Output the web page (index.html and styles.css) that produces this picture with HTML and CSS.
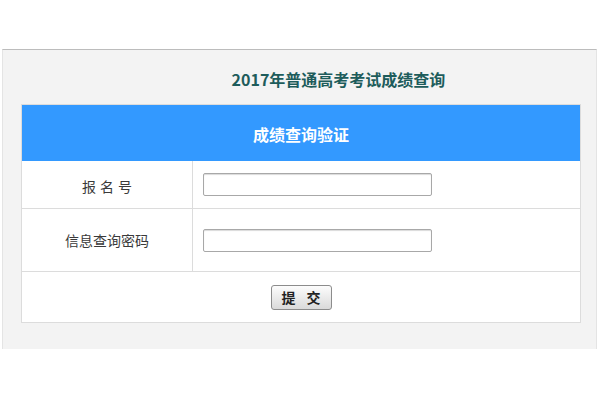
FILE: index.html
```html
<!DOCTYPE html>
<html lang="zh-CN">

<head>
    <meta charset="UTF-8">
    <title>2017年普通高考考试成绩查询</title>
    <link rel="stylesheet" href="styles.css">
</head>

<body>
    <div class="panel">
        <h1 class="title">2017年普通高考考试成绩查询</h1>

        <!-- Query Form -->
        <form class="query-form" action="#" method="POST">
            <div class="form-head">成绩查询验证</div>
            <div class="form-row">
                <label class="row-label spaced" for="exam-no">报名号</label>
                <div class="row-field">
                    <input type="text" id="exam-no" name="exam_no">
                </div>
            </div>
            <div class="form-row tall">
                <label class="row-label" for="query-pwd">信息查询密码</label>
                <div class="row-field">
                    <input type="password" id="query-pwd" name="query_pwd">
                </div>
            </div>
            <div class="form-foot">
                <button type="submit" class="submit-btn">提 交</button>
            </div>
        </form>
    </div>
</body>

</html>
```

FILE: styles.css
```css
body {
    margin: 0;
    padding: 0;
    background-color: #fff;
    font-family: "Noto Sans CJK SC", "Noto Sans", sans-serif;
}

/* Gray page panel */
.panel {
    margin: 49px 3px 0 2px;
    padding: 0 16px 26px 18px;
    background-color: #f3f3f3;
    border-top: 1px solid #bcbcbc;
    border-left: 1px solid #e4e4e4;
    border-right: 1px solid #e4e4e4;
}

.title {
    margin: 0;
    padding: 19px 0 15px 76px;
    font-size: 16px;
    line-height: 20px;
    font-weight: bold;
    color: #1d5c5b;
    text-align: center;
}

/* Form table */
.query-form {
    width: 560px;
    box-sizing: border-box;
    margin: 0;
    border: 1px solid #dcdcdc;
    background-color: #fff;
}

.form-head {
    height: 56px;
    padding-top: 2px;
    box-sizing: border-box;
    background-color: #3399ff;
    color: #fff;
    font-size: 16px;
    font-weight: bold;
    display: flex;
    align-items: center;
    justify-content: center;
}

.form-row {
    display: grid;
    grid-template-columns: 171px 1fr;
    height: 48px;
    box-sizing: border-box;
    border-bottom: 1px solid #dcdcdc;
}

.form-row.tall {
    height: 63px;
}

.row-label {
    border-right: 1px solid #dcdcdc;
    display: flex;
    align-items: center;
    justify-content: center;
    font-size: 14px;
    color: #3a3a3a;
}

.row-label.spaced {
    letter-spacing: 4px;
    padding-left: 4px;
    padding-top: 3px;
}

.row-field {
    display: flex;
    align-items: center;
    padding-left: 10px;
}

.row-field input {
    width: 229px;
    height: 23px;
    box-sizing: border-box;
    margin: 0;
    border: 1px solid #a8a8a8;
    border-radius: 2px;
    box-shadow: inset 0 1px 1px rgba(0, 0, 0, 0.15);
    background-color: #fff;
}

.form-foot {
    height: 50px;
    display: flex;
    align-items: center;
    justify-content: center;
}

.submit-btn {
    width: 61px;
    height: 25px;
    padding: 0;
    border: 1px solid #8c8c8c;
    border-radius: 3px;
    background: linear-gradient(#fcfcfc, #dadada);
    font-family: "Noto Sans CJK SC", sans-serif;
    font-size: 14px;
    font-weight: bold;
    color: #222;
    letter-spacing: 4px;
    text-indent: 4px;
    cursor: pointer;
}
```
